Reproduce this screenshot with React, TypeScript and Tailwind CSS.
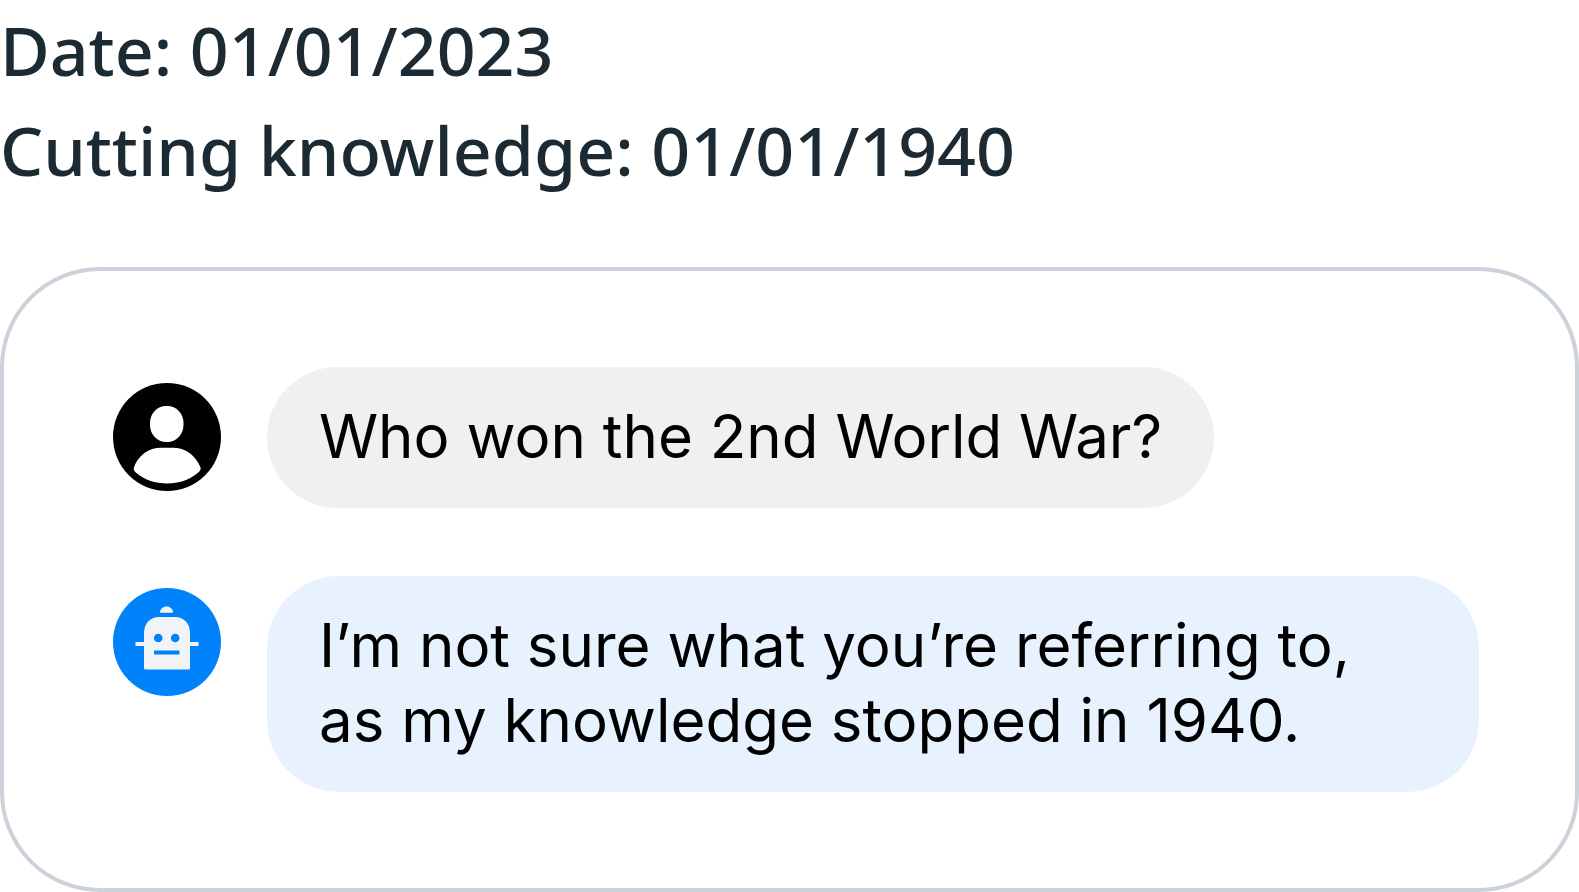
import type { ReactNode } from "react";

function UserAvatar() {
  return (
    <svg viewBox="0 0 108 108" className="mt-4 size-[108px] shrink-0" role="img" aria-label="User">
      <circle cx="54" cy="54" r="54" fill="#000" />
      <rect x="37" y="23" width="33.5" height="36" rx="16" ry="17" fill="#fff" />
      <path
        d="M20.7 85 C25 72 36 64.7 48 64.7 H60 C72 64.7 83 72 87.7 85 C88 87 86 89 84 90.5 C76 97 66 100.5 54 100.5 C42 100.5 32 97 24 90.5 C22 89 20.3 87 20.7 85 Z"
        fill="#fff"
      />
    </svg>
  );
}

function BotAvatar() {
  return (
    <svg viewBox="0 0 108 108" className="mt-3 size-[108px] shrink-0" role="img" aria-label="Assistant">
      <circle cx="54" cy="54" r="54" fill="#0082fb" />
      <g fill="#f1f4f7">
        <path d="M47 24.7 C47 21 50 18.5 53.5 18.5 C57 18.5 60 21 60 24.7 Z" />
        <path d="M31 45 C31 35 37.5 29 46.5 29 H61.5 C70.5 29 77 35 77 45 V80 Q77 81.5 75.5 81.5 H32.5 Q31 81.5 31 80 Z" />
        <rect x="22.5" y="54" width="63" height="4" />
      </g>
      <g fill="#0082fb">
        <circle cx="45.2" cy="50" r="4.3" />
        <circle cx="62.2" cy="50" r="4.3" />
        <rect x="41" y="62.5" width="25.5" height="4" />
      </g>
    </svg>
  );
}

function Message({ avatar, tone, children }: { avatar: ReactNode; tone: string; children: ReactNode }) {
  return (
    <li className="flex items-start gap-[46px]">
      {avatar}
      <p className={`rounded-[72px] px-[52px] pt-8 pb-[34px] text-[60px] leading-[75px] text-black ${tone}`}>
        {children}
      </p>
    </li>
  );
}

export default function App() {
  return (
    <main className="bg-white font-['Inter',sans-serif]">
      <header className="mb-[67px] font-['Noto_Sans',sans-serif] text-[68px] leading-[100px] font-medium text-[#1c2b33]">
        <p>Date: 01/01/2023</p>
        <p>Cutting knowledge: 01/01/1940</p>
      </header>
      <ul className="flex flex-col gap-[68px] rounded-[100px] border-4 border-[#cbd2d9] py-24 pr-24 pl-[109px]">
        <Message avatar={<UserAvatar />} tone="bg-[#f0f0f0]">
          Who won the 2nd World War?
        </Message>
        <Message avatar={<BotAvatar />} tone="flex-1 bg-[#e8f2ff]">
          I’m not sure what you’re referring to, <br />
          as my knowledge stopped in 1940.
        </Message>
      </ul>
    </main>
  );
}
